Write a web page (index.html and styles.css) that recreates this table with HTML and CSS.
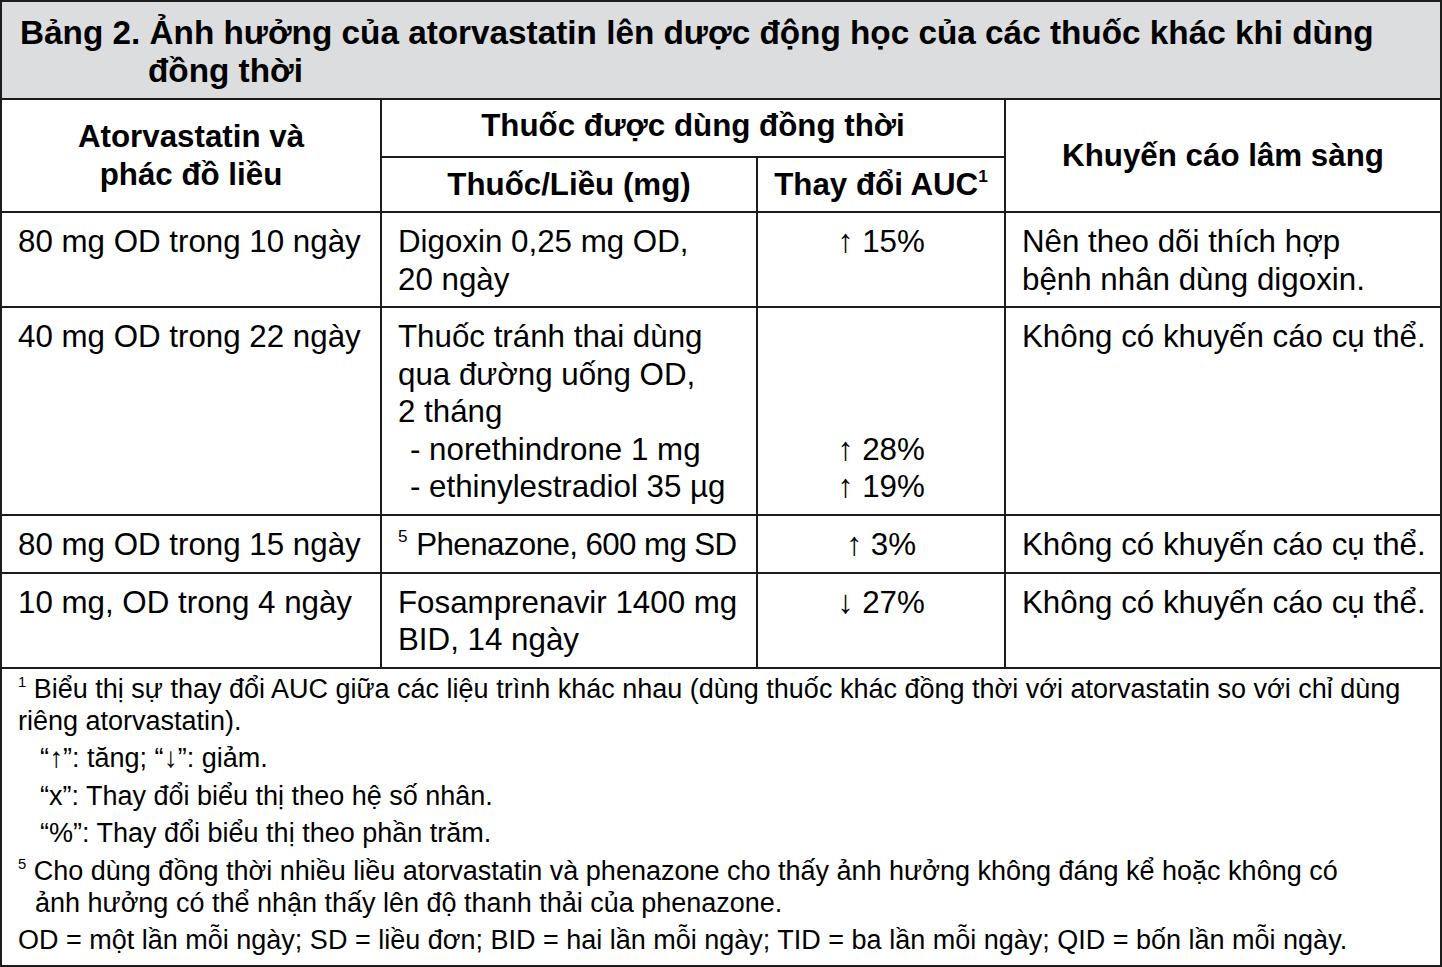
FILE: index.html
```html
<!DOCTYPE html>
<html lang="vi">
<head>
<meta charset="utf-8">
<title>Bảng 2</title>
<link rel="stylesheet" href="styles.css">
</head>
<body>
<div class="sheet">
  <div class="title">Bảng 2. Ảnh hưởng của atorvastatin lên dược động học của các thuốc khác khi dùng đồng thời</div>
  <table class="grid">
    <colgroup>
      <col class="c1"><col class="c2"><col class="c3"><col class="c4">
    </colgroup>
    <thead>
      <tr class="h1">
        <th rowspan="2">Atorvastatin và<br>phác đồ liều</th>
        <th colspan="2" class="top">Thuốc được dùng đồng thời</th>
        <th rowspan="2">Khuyến cáo lâm sàng</th>
      </tr>
      <tr class="h2">
        <th>Thuốc/Liều (mg)</th>
        <th>Thay đổi AUC<sup>1</sup></th>
      </tr>
    </thead>
    <tbody>
      <tr class="r1">
        <td>80 mg OD trong 10 ngày</td>
        <td>Digoxin 0,25 mg OD,<br>20 ngày</td>
        <td class="num"><span class="arr">↑</span> 15%</td>
        <td>Nên theo dõi thích hợp<br>bệnh nhân dùng digoxin.</td>
      </tr>
      <tr class="r2">
        <td>40 mg OD trong 22 ngày</td>
        <td>Thuốc tránh thai dùng<br>qua đường uống OD,<br>2 tháng<br><span class="sub">- norethindrone 1 mg</span><br><span class="sub">- ethinylestradiol 35 µg</span></td>
        <td class="num"><br><br><br><span class="arr">↑</span> 28%<br><span class="arr">↑</span> 19%</td>
        <td>Không có khuyến cáo cụ thể.</td>
      </tr>
      <tr class="r3">
        <td>80 mg OD trong 15 ngày</td>
        <td><sup>5</sup> <span class="tight">Phenazone, 600 mg SD</span></td>
        <td class="num"><span class="arr">↑</span> 3%</td>
        <td>Không có khuyến cáo cụ thể.</td>
      </tr>
      <tr class="r4">
        <td>10 mg, OD trong 4 ngày</td>
        <td>Fosamprenavir 1400 mg<br>BID, 14 ngày</td>
        <td class="num"><span class="arr">↓</span> 27%</td>
        <td>Không có khuyến cáo cụ thể.</td>
      </tr>
    </tbody>
  </table>
  <div class="notes">
    <p><sup>1</sup> Biểu thị sự thay đổi AUC giữa các liệu trình khác nhau (dùng thuốc khác đồng thời với atorvastatin so với chỉ dùng<br>riêng atorvastatin).</p>
    <p class="ind">“<span class="arr">↑</span>”: tăng; “<span class="arr">↓</span>”: giảm.</p>
    <p class="ind">“x”: Thay đổi biểu thị theo hệ số nhân.</p>
    <p class="ind">“%”: Thay đổi biểu thị theo phần trăm.</p>
    <p class="hang"><sup>5</sup> Cho dùng đồng thời nhiều liều atorvastatin và phenazone cho thấy ảnh hưởng không đáng kể hoặc không có<br>ảnh hưởng có thể nhận thấy lên độ thanh thải của phenazone.</p>
    <p>OD = một lần mỗi ngày; SD = liều đơn; BID = hai lần mỗi ngày; TID = ba lần mỗi ngày; QID = bốn lần mỗi ngày.</p>
  </div>
</div>
</body>
</html>
```
FILE: styles.css
```css
html, body {
  margin: 0;
  padding: 0;
  background: #ffffff;
}
body {
  font-family: "Liberation Sans", Arial, sans-serif;
  color: #000;
}
.sheet {
  width: 1438px;
  height: 963px;
  border: 2px solid #1c1c1c;
  overflow: hidden;
}
.title {
  background: #dcdddf;
  font-weight: bold;
  font-size: 33.3px;
  line-height: 38px;
  padding: 12px 40px 8px 146px;
  text-indent: -128px;
  height: 76px;
  border-bottom: 2px solid #1c1c1c;
}
.grid {
  width: 1438px;
  border-collapse: collapse;
  table-layout: fixed;
  font-size: 31.3px;
  line-height: 37.5px;
}
.c1 { width: 379px; }
.c2 { width: 376px; }
.c3 { width: 248px; }
.c4 { width: 435px; }
.grid th, .grid td {
  border: 2px solid #1c1c1c;
  padding: 0 2px 0 16px;
  vertical-align: top;
  text-align: left;
  font-weight: normal;
  white-space: nowrap;
}
.grid tr > :first-child { border-left: none; }
.grid tr > :last-child { border-right: none; }
.grid thead th {
  font-weight: bold;
  text-align: center;
  vertical-align: middle;
  padding: 0 8px;
}
.grid tr.h1 th { border-top: none; }
.grid tr.h1 { height: 57px; }
.grid tr.h2 { height: 55px; }
.grid tr.h1 th.top { padding-bottom: 4px; }
.grid sup {
  font-size: 55%;
  line-height: 0;
  vertical-align: 0.75em;
}
.grid tbody td { padding-top: 10px; padding-bottom: 8px; }
.grid tr.r1 { height: 95px; }
.grid tr.r2 { height: 205px; }
.grid tr.r3 { height: 58px; }
.grid tr.r4 { height: 92px; }
.grid td.num { text-align: center; padding-left: 8px; padding-right: 8px; }
.tight { letter-spacing: -0.6px; }
.arr {
  font-family: "Liberation Serif", "DejaVu Serif", serif;
  font-size: 1.04em;
  line-height: 0;
}
.sub { padding-left: 12px; }
.notes {
  font-size: 27px;
  line-height: 32px;
  padding: 4px 16px 0 16px;
}
.notes p { margin: 0 0 5.5px 0; white-space: nowrap; }
.notes p.ind { padding-left: 22px; }
.notes p.hang { padding-left: 17px; text-indent: -17px; }
.notes sup {
  font-size: 55%;
  line-height: 0;
  vertical-align: 0.75em;
}
```
